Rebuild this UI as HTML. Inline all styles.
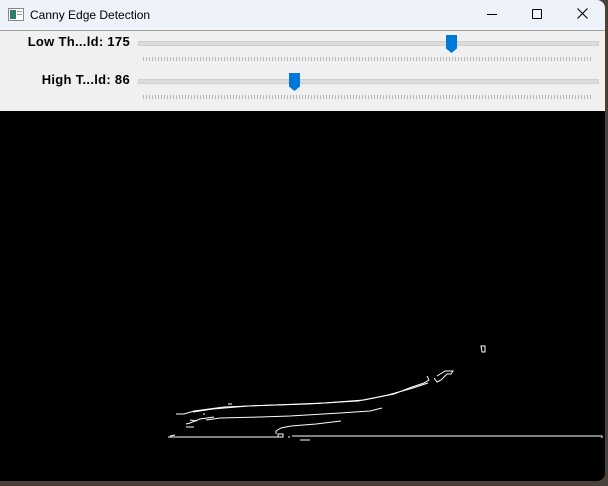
<!DOCTYPE html>
<html><head><style>
body{margin:0;width:608px;height:486px;overflow:hidden;background:#4a4038;font-family:"Liberation Sans",sans-serif;position:relative}
#win{position:absolute;left:0;top:0;width:605px;height:481px;background:#000;border-radius:0 8px 8px 0;overflow:hidden}
#title{position:absolute;left:0;top:0;width:605px;height:30px;background:#eef2f9;border-bottom:1px solid #a0a0a0;font-size:12px;color:#000}
#ctrl{position:absolute;left:0;top:31px;width:605px;height:80px;background:#f0f0f0}
.lbl{position:absolute;font-weight:bold;font-size:13px;letter-spacing:0.3px;right:475px;text-align:right;white-space:nowrap}
.track{position:absolute;left:138px;width:459px;height:3px;background:#dcdcdc;border:1px solid #d0d0d0}
.ticks{position:absolute;left:143px;width:450px;height:4px;background:repeating-linear-gradient(90deg,#b8b8b8 0 1px,transparent 1px 3px)}
.thumb{position:absolute;width:11px;height:18px;background:#0078d7;clip-path:polygon(0 0,100% 0,100% 75%,50% 100%,0 75%)}
</style></head><body>
<div id="win">
<div id="title">
<svg style="position:absolute;left:8px;top:8px" width="16" height="13"><rect x="0.5" y="0.5" width="15" height="12" fill="#fff" stroke="#888"/><rect x="2" y="2" width="6" height="9" fill="#2f7d6a"/><rect x="9" y="3" width="5" height="1" fill="#999"/><rect x="9" y="6" width="5" height="1" fill="#999"/></svg>
<span style="position:absolute;left:30px;top:8px">Canny Edge Detection</span>
<div style="position:absolute;left:487px;top:14px;width:10px;height:1px;background:#000"></div>
<div style="position:absolute;left:532px;top:9px;width:8px;height:8px;border:1px solid #000;border-radius:1px"></div>
<svg style="position:absolute;left:577px;top:8px" width="11" height="11"><path d="M0.5 0.5L10.5 10.5M10.5 0.5L0.5 10.5" stroke="#000" stroke-width="1.1"/></svg>
</div>
<div id="ctrl">
<div class="lbl" style="top:3px">Low Th...ld: 175</div>
<div class="track" style="top:10px"></div>
<div class="ticks" style="top:26px"></div>
<div class="thumb" style="left:446px;top:4px"></div>
<div class="lbl" style="top:41px">High T...ld: 86</div>
<div class="track" style="top:48px"></div>
<div class="ticks" style="top:64px"></div>
<div class="thumb" style="left:289px;top:42px"></div>
</div>
<svg style="position:absolute;left:0;top:0" width="605" height="481" fill="none" stroke="#fff" stroke-width="1">
<path d="M481 346h4v6h-3z"/>
<path d="M437 376l8-5h8l-2 3h-4l-6 6-4 2-3-4"/>
<path d="M427 376l2 4-5 3-12 4-18 7-30 6-40 3-50 2-50 2-30 4-10 3-8 0"/>
<path d="M428 383l-15 5-25 7-30 6-50 3-60 2-35 3-20 3"/>
<path d="M382 408l-12 3-30 2-50 3-30 1-40 1-14 2"/>
<path d="M341 421l-25 3-25 2-10 2-5 3 0 3"/>
<path d="M214 417l-14 2-10 4-4 1"/>
<path d="M186 427h8M228 404h4M203 414h2M190 420l7 1"/>
<path d="M168 437h110v-3h5v3h-5M170 436l5-1M292 436h310v2M290 437h-2M300 440h10"/>
</svg>
</div>
</body></html>
